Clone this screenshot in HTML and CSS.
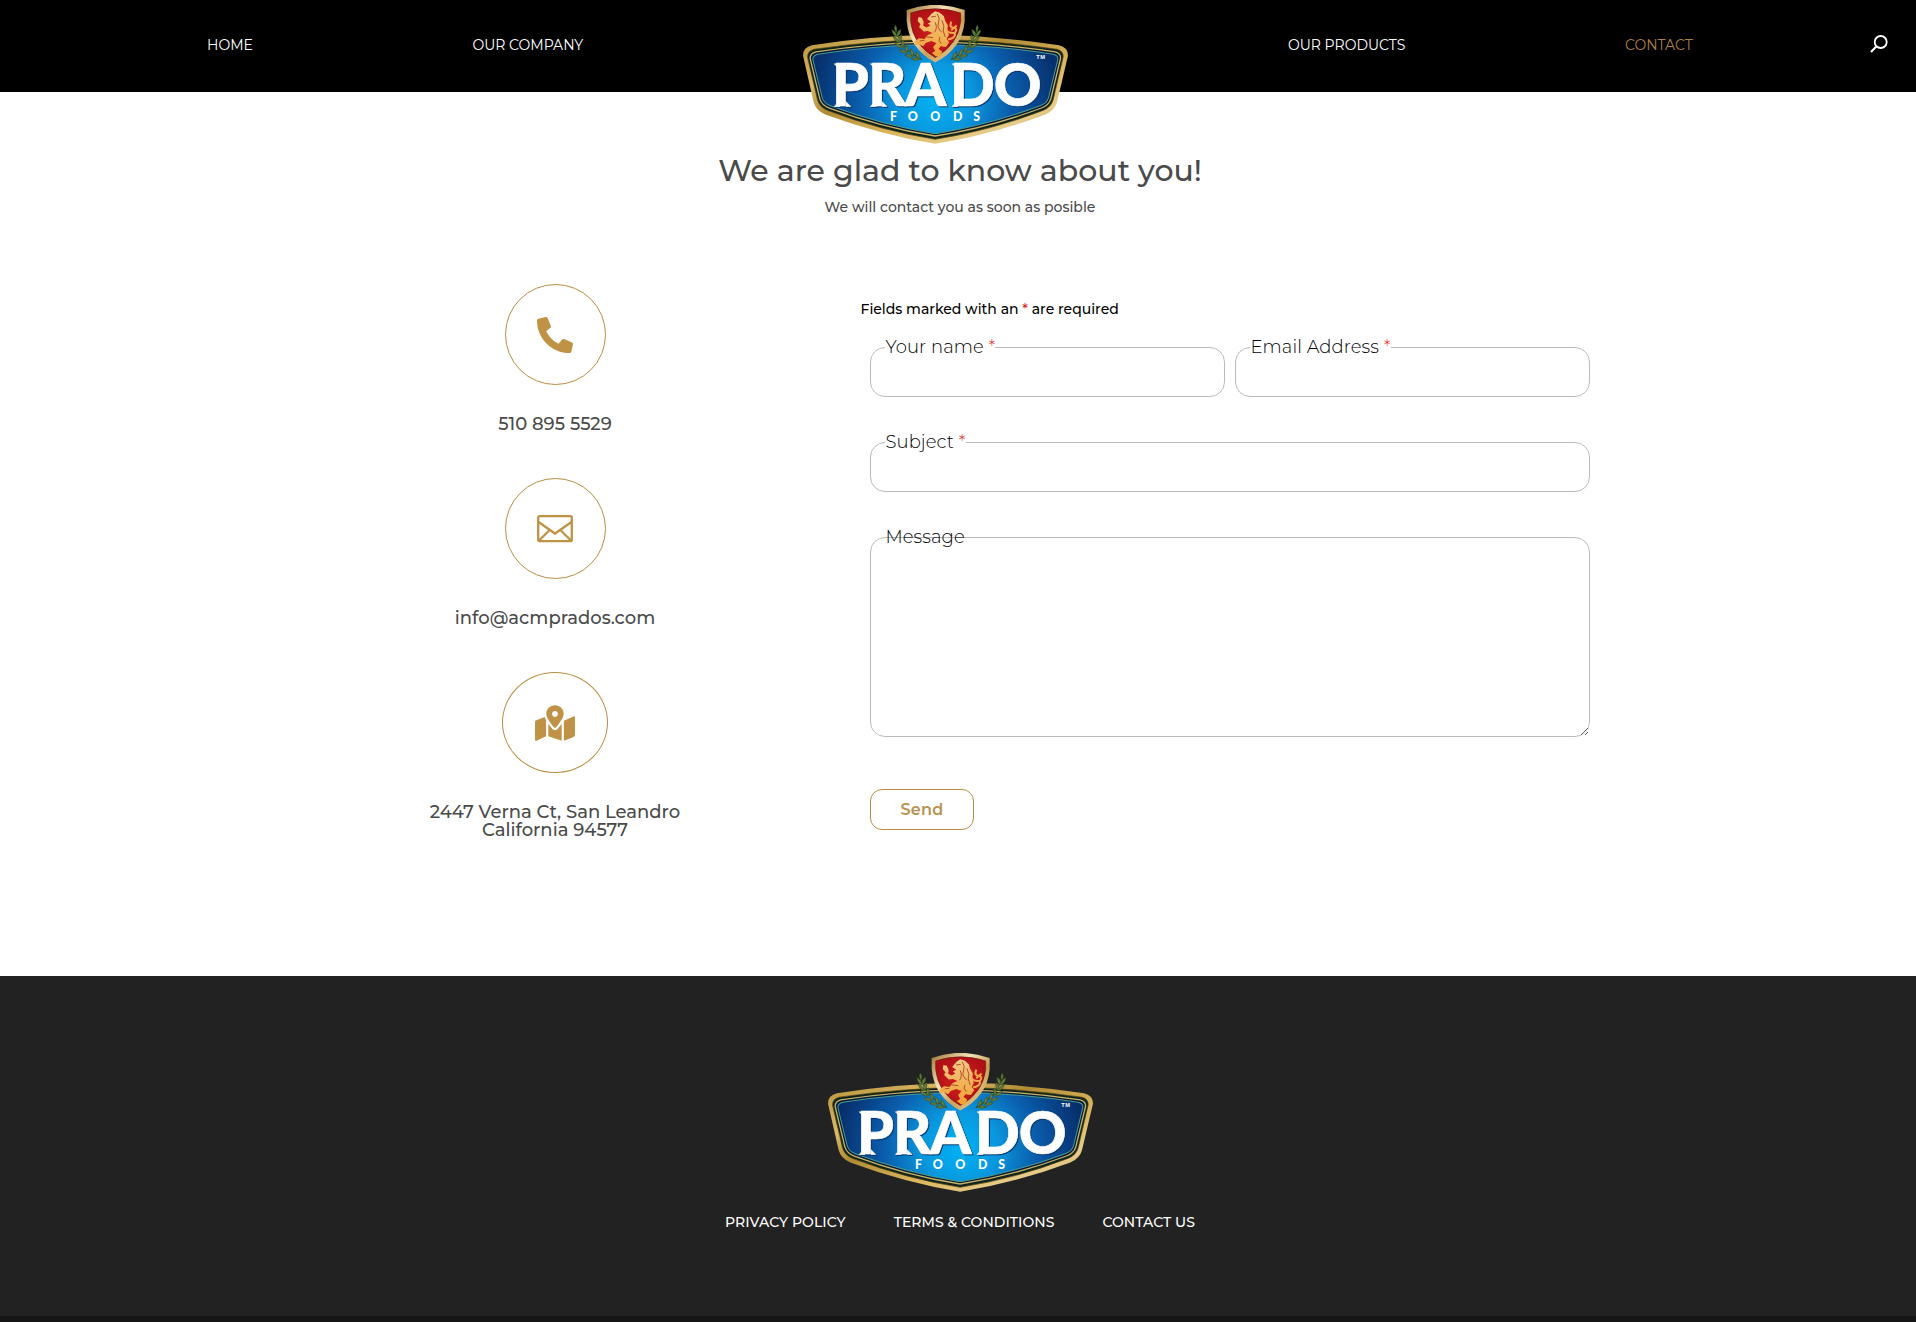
FILE: index.html
```html
<!DOCTYPE html>
<html lang="en">
<head>
<meta charset="utf-8">
<title>Contact – Prado Foods</title>
<link rel="stylesheet" href="styles.css">
</head>
<body>
<svg class="defs" aria-hidden="true">
  <defs>
    <linearGradient id="gold" x1="0" y1="0" x2="1" y2="1">
      <stop offset="0" stop-color="#b8923a"/><stop offset=".25" stop-color="#d9b968"/><stop offset=".4" stop-color="#b08b34"/><stop offset=".6" stop-color="#d8b45c"/><stop offset=".8" stop-color="#e6cd8a"/><stop offset="1" stop-color="#a98230"/>
    </linearGradient>
    <linearGradient id="shieldGold" x1="0" y1="0" x2="1" y2="1">
      <stop offset="0" stop-color="#9c7430"/><stop offset=".35" stop-color="#f3e2b8"/><stop offset=".6" stop-color="#c99f58"/><stop offset="1" stop-color="#f0d9a4"/>
    </linearGradient>
    <linearGradient id="lion" x1="0" y1="0" x2="0" y2="1">
      <stop offset="0" stop-color="#f3c987"/><stop offset="1" stop-color="#f0a032"/>
    </linearGradient>
    <radialGradient id="blue" gradientUnits="userSpaceOnUse" cx="436" cy="300" r="370">
      <stop offset="0" stop-color="#00b2f3"/><stop offset=".3" stop-color="#0a97de"/><stop offset=".62" stop-color="#0a5cab"/><stop offset="1" stop-color="#072f6c"/>
    </radialGradient>
    <radialGradient id="red"><stop offset="0" stop-color="#d8201f"/><stop offset="1" stop-color="#b01117"/></radialGradient>
    <g id="leaf"><path d="M0 2Q-14 -6 -12 -22Q-1 -14 0 -2Q2 -16 14 -19Q14 -5 0 2Z"/></g>
    <g id="laurel" fill="#667f3c" stroke="#2f461d" stroke-width="1.5">
      <path d="M318 80Q326 140 396 178" fill="none" stroke-width="3"/>
      <path d="M319 96Q311 84 317 74Q325 84 319 96Z"/>
      <use href="#leaf" transform="translate(322 108) rotate(-8)"/>
      <use href="#leaf" transform="translate(328 125) rotate(-16)"/>
      <use href="#leaf" transform="translate(338 142) rotate(-30)"/>
      <use href="#leaf" transform="translate(352 157) rotate(-42)"/>
      <use href="#leaf" transform="translate(370 168) rotate(-54)"/>
      <use href="#leaf" transform="translate(389 176) rotate(-62)"/>
    </g>
    <symbol id="prado" viewBox="41.500 14 791 418" preserveAspectRatio="none">
      <path fill="url(#gold)" d="M42 168Q40 142 68 135Q250 107 436 103Q622 107 806 135Q834 142 832 168L800 305Q793 332 765 343Q600 405 436 431Q275 405 108 343Q80 332 73 305Z"/>
      <path fill="#10261d" stroke="#5c4310" stroke-width="2" d="M55 171Q54 153 74 147Q250 121 436 117Q622 121 800 147Q820 153 818 171L788 300Q782 322 758 331Q600 392 436 418Q275 392 115 331Q91 322 85 300Z"/>
      <path fill="#071a3c" stroke="#c9b264" stroke-width="4" d="M63 175Q62 160 80 155Q250 129 436 125Q622 129 794 155Q812 160 810 175L781 297Q775 315 755 323Q600 382 436 408Q275 382 118 323Q98 315 92 297Z"/>
      <path fill="url(#blue)" stroke="#4a9a8c" stroke-width="3" d="M71 178Q70 166 86 162Q250 136 436 132Q622 136 788 162Q804 166 802 178L774 294Q769 309 751 316Q600 374 436 401Q275 374 121 316Q105 309 99 294Z"/>
      <use href="#laurel"/>
      <use href="#laurel" transform="matrix(-1 0 0 1 879 0)"/>
      <path fill="url(#shieldGold)" d="M351 29Q436 -2 524 29V62Q517 145 436 187Q358 145 351 62Z"/>
      <path fill="url(#red)" stroke="#6e1a0e" stroke-width="2" d="M363 38Q436 13 512 38V64Q504 133 436 172Q370 133 363 64Z"/>
      <path fill="url(#lion)" d="M425 40L436 33L450 37L462 48L466 62L474 76L472 90L477 104L470 116L478 126L468 140L452 138L446 146L457 154L452 168L438 168L426 158L436 152L430 140L440 128L424 122L408 128L400 138L388 132L378 136L374 124L388 114L404 116L414 104L428 98L414 92L402 94L388 80L392 72L384 62L386 50L396 52L402 66L400 76L410 82L422 76L414 70L424 64L412 56Z"/>
      <path fill="none" stroke="#efa84a" stroke-width="6" d="M474 118Q500 112 494 98Q474 100 470 88M494 98Q504 88 494 82Q476 84 484 64M484 90L500 76"/>
      <path fill="none" stroke="#a8391a" stroke-width="2.500" d="M424 50L438 48M442 40Q452 54 446 68T456 96M436 66Q444 84 434 96M456 60Q466 78 460 92L466 110M410 110L430 112M450 110Q444 122 454 130M390 122L404 120"/>
      <g fill="#fff">
        <g class="mark-name">
          <text x="128" y="318">P</text><text x="236" y="318">R</text><text x="346" y="318">A</text><text x="480" y="318">D</text><text x="611" y="318">O</text>
          <path d="M135 191H152V204L144 201ZM135 319H152V305L144 309ZM184 319H170V305L176 311ZM243 191H260V204L252 201ZM243 319H260V305L252 309ZM292 319H278V305L284 311ZM487 191H504V204L496 201ZM487 319H504V305L496 309Z"/>
        </g>
        <text class="mark-sub" x="301 354 421 489 550" y="362">FOODS</text>
        <text class="mark-tm" x="738 750" y="177">TM</text>
      </g>
    </symbol>
  </defs>
</svg>

<header class="topbar">
  <nav class="nav">
    <a class="w-home" href="#">HOME</a>
    <a class="w-company" href="#">OUR COMPANY</a>
    <a class="brand" href="#" aria-label="Prado Foods"><svg class="logo"><use href="#prado"/></svg></a>
    <a class="w-products" href="#">OUR PRODUCTS</a>
    <a class="w-contact current" href="#">CONTACT</a>
    <a class="search" href="#" aria-label="Search"><svg viewBox="0 0 18 18"><circle cx="10.700" cy="7" r="6" fill="none" stroke="#fff" stroke-width="1.800"/><path d="M6.300 11.600L1 17" stroke="#fff" stroke-width="2.200"/></svg></a>
  </nav>
</header>

<main>
  <section class="intro">
    <h1>We are glad to know about you!</h1>
    <p>We will contact you as soon as posible</p>
  </section>
  <div class="columns">
    <section class="contacts">
      <div class="contact">
        <span class="ring"><svg width="36" height="36" viewBox="0 0 512 512"><path d="M493.400 24.600l-104-24c-11.300-2.600-22.900 3.300-27.500 13.900l-48 112c-4.200 9.800-1.400 21.300 6.900 28l60.600 49.600c-36 76.700-98.900 140.500-177.200 177.200l-49.600-60.600c-6.800-8.300-18.200-11.100-28-6.900l-112 48C3.900 366.500-2 378.100.6 389.400l24 104C27.100 504.200 36.700 512 48 512c256.100 0 464-207.500 464-464 0-11.200-7.700-20.900-18.600-23.400z" transform="matrix(-1 0 0 1 512 0)"/></svg></span>
        <p>510 895 5529</p>
      </div>
      <div class="contact">
        <span class="ring"><svg width="36" height="28" viewBox="0 0 36 28" class="line"><rect x="1.200" y="1.200" width="33.600" height="25" rx="1.500"/><path d="M1.500 7L18 18.500L34.500 7M2 25.500L12.700 15M34 25.500L23.300 15"/></svg></span>
        <p>info@acmprados.com</p>
      </div>
      <div class="contact">
        <span class="ring wide"><svg width="40" height="36" viewBox="0 0 576 512"><path d="M288 0c-69.600 0-126 56.400-126 126 0 56.300 82.400 158.800 113.900 196.000 6.400 7.500 17.800 7.500 24.200 0C331.600 284.800 414 182.300 414 126 414 56.400 357.600 0 288 0zm0 168c-23.200 0-42-18.800-42-42s18.800-42 42-42 42 18.800 42 42-18.800 42-42 42zM20.100 216C8 220.800 0 232.600 0 245.700V496c0 11.300 11.400 19.100 21.900 14.900L160 448V214.900c-8.800-16-16.100-31.500-21.300-46.400L20.100 216zM288 359.700c-14.100 0-27.400-6.200-36.500-17-19.700-23.200-40.600-49.600-59.500-76.700v182l192 64V266c-18.900 27.100-39.800 53.500-59.500 76.700-9.100 10.800-22.400 17-36.500 17zM554.100 161.200L416 224v288l139.900-56c12.100-4.900 20.100-16.600 20.100-29.700V176c0-11.300-11.400-19.100-21.900-14.800z"/></svg></span>
        <p>2447 Verna Ct, San Leandro<br>California 94577</p>
      </div>
    </section>
    <form class="form">
      <p class="note">Fields marked with an <i>*</i> are required</p>
      <div class="fields">
        <label class="field"><span class="cap">Your name <i>*</i></span><input type="text"></label>
        <label class="field"><span class="cap">Email Address <i>*</i></span><input type="text"></label>
        <label class="field full"><span class="cap">Subject <i>*</i></span><input type="text"></label>
        <label class="field full"><span class="cap clear">Message</span><textarea></textarea></label>
      </div>
      <button type="button">Send</button>
    </form>
  </div>
</main>

<footer class="footer">
  <svg class="logo"><use href="#prado"/></svg>
  <nav class="links">
    <a href="#">PRIVACY POLICY</a>
    <a href="#">TERMS &amp; CONDITIONS</a>
    <a href="#">CONTACT US</a>
  </nav>
</footer>
<div class="bottom"></div>
</body>
</html>
```
FILE: styles.css
```css
* { box-sizing: border-box; }
body { margin: 0; background: #fff; color: #4a4a4a; font-family: Montserrat, Inter, "Open Sans", sans-serif; font-size: 14px; font-weight: 500; overflow: hidden; }
h1, p { margin: 0; font-weight: 500; }
a { color: inherit; text-decoration: none; }
i { color: #d22; font-style: normal; }
.defs { position: absolute; width: 0; height: 0; }
.logo { display: block; width: 265px; height: 139px; }
.mark-name { font: 900 176px Lato, sans-serif; stroke: #fff; stroke-width: 2px; filter: drop-shadow(3px 3px 1px #08386f); }
.mark-sub { font: 900 37px Lato, sans-serif; }
.mark-tm { font: 700 17px "Liberation Sans", sans-serif; }

.topbar { height: 92px; background: #000; color: #fff; }
.nav { display: flex; height: 92px; line-height: 90px; font-weight: 400; }
.nav a { flex: none; white-space: nowrap; }
.w-home { margin-left: 207px; width: 265.500px; }
.w-company { width: 330.500px; }
.brand { width: 485px; padding-top: 5px; }
.w-products { width: 337px; }
.w-contact { width: 244.500px; }
.current { color: #b17f45; }
.search { padding-top: 35px; }
.search svg { display: block; width: 18px; height: 18px; }

main { height: 884px; padding-left: 4px; }
.intro { padding-top: 59px; text-align: center; }
.intro h1 { font-size: 30px; line-height: 40px; }
.intro p { margin-top: 6px; line-height: 20px; }
.columns { display: flex; padding-top: 67px; }
.contacts { width: 302px; margin-left: 400px; display: flex; flex-direction: column; gap: 38px; text-align: center; font-size: 18px; line-height: 18px; white-space: nowrap; }
.contact { height: 156px; display: flex; flex-direction: column; align-items: center; gap: 30px; }
.ring { display: flex; align-items: center; justify-content: center; width: 101px; height: 101px; flex: none; border: 1px solid #b98d42; border-radius: 50%; }
.ring.wide { width: 106px; }
.ring svg { fill: #c09246; }
.ring .line { fill: none; stroke: #c09246; stroke-width: 2.300; }

.form { width: 738px; margin-left: 154px; padding-top: 15px; }
.note { padding-left: .5px; color: #000; line-height: 20px; }
.fields { display: grid; grid-template-columns: 355px 355px; gap: 45px 10px; padding: 28px 0 0 10px; }
.field { position: relative; display: block; }
.full { grid-column: 1 / -1; }
.cap { position: absolute; left: 15px; top: -11px; height: 22px; line-height: 22px; padding-left: .5px; background: #fff; color: #000; font-size: 18px; font-weight: 300; letter-spacing: .08px; white-space: nowrap; }
.clear { background: none; }
input, textarea { display: block; width: 100%; height: 50px; margin: 0; background: none; border: 1px solid #bbb; border-radius: 15px; outline: 0; }
textarea { height: 200px; resize: both; }
button { display: block; width: 104px; height: 41px; margin: 52px 0 0 10px; padding: 0; background: #fff; border: 1px solid #b98d42; border-radius: 12px; color: #b9924f; font: 600 16px Montserrat, Inter, sans-serif; letter-spacing: .2px; }

.footer { height: 340px; padding: 77px 0 0 4px; background: #222; color: #fff; display: flex; flex-direction: column; align-items: center; }
.links { display: flex; gap: 48px; margin-top: 20px; line-height: 20px; letter-spacing: .05px; white-space: nowrap; }
.bottom { height: 6px; background: #151515; }
```
